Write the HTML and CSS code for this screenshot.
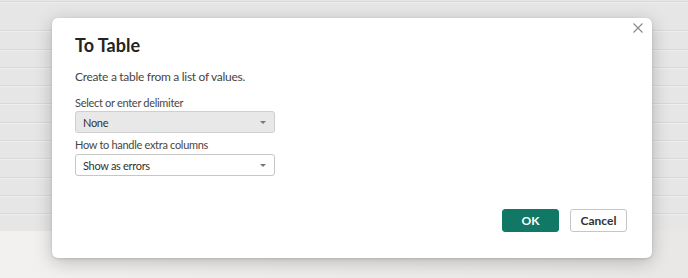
FILE: index.html
```html
<!DOCTYPE html>
<html lang="en">
<head>
  <meta charset="UTF-8" />
  <title>To Table</title>
  <link rel="stylesheet" href="styles.css">
</head>
<body>
  <div class="backdrop">
    <div class="grid"></div>
    <div class="footer-area"></div>
  </div>

  <div class="dialog">
    <button class="close" aria-label="Close">
      <svg width="10" height="10" viewBox="0 0 10 10">
        <path d="M0.5 0.5 L9.5 9.5 M9.5 0.5 L0.5 9.5" stroke="#8a8886" stroke-width="1.1" fill="none"/>
      </svg>
    </button>
    <h2>To Table</h2>
    <p class="desc">Create a table from a list of values.</p>

    <label class="field-label">Select or enter delimiter</label>
    <div class="select disabled">
      <span>None</span>
      <span class="caret"></span>
    </div>

    <label class="field-label second">How to handle extra columns</label>
    <div class="select">
      <span>Show as errors</span>
      <span class="caret"></span>
    </div>

    <div class="actions">
      <button class="btn primary">OK</button>
      <button class="btn">Cancel</button>
    </div>
  </div>
</body>
</html>
```

FILE: styles.css
```css
* {
  box-sizing: border-box;
}

body {
  margin: 0;
  font-family: Lato, 'Open Sans', sans-serif;
  background: #f0efee;
  overflow: hidden;
}

.backdrop {
  height: 278px;
  display: flex;
  flex-direction: column;
}

.grid {
  height: 231px;
  background-color: #e6e6e6;
  background-image: repeating-linear-gradient(to bottom,
    transparent 0, transparent 13.3px,
    #d9d9d9 13.3px, #d9d9d9 14.3px, #eeeeee 14.3px, #eeeeee 15.3px,
    transparent 15.3px, transparent 18.3px);
  background-position: 0 17px;
  background-repeat: repeat-y;
}

.footer-area {
  flex: 1;
  background: linear-gradient(to right, #f2f1f0, #e9e8e7);
}

.dialog {
  position: absolute;
  left: 52px;
  top: 18px;
  width: 600px;
  height: 240px;
  background: #fff;
  border-radius: 6px;
  box-shadow: 0 4px 18px rgba(0,0,0,0.22), 0 1px 3px rgba(0,0,0,0.12);
  padding: 15px 25px 26px 23px;
  display: flex;
  flex-direction: column;
  align-items: flex-start;
  color: #323130;
}

.close {
  position: absolute;
  left: 581px;
  top: 5px;
  width: 10px;
  height: 10px;
  padding: 0;
  border: none;
  background: none;
  line-height: 0;
}

h2 {
  margin: 0;
  font-size: 18px;
  line-height: 24px;
  font-weight: 700;
  color: #252423;
}

.desc {
  margin: 11px 0 0;
  font-size: 12px;
  letter-spacing: -0.3px;
  line-height: 18px;
  color: #484644;
}

.field-label {
  margin-top: 9px;
  font-size: 11px;
  letter-spacing: -0.3px;
  line-height: 16px;
  color: #484644;
}

.field-label.second {
  margin-top: 4px;
  margin-bottom: 1px;
}

.select {
  width: 200px;
  height: 22px;
  border: 1px solid #c8c6c4;
  border-radius: 3px;
  background: #fff;
  display: flex;
  align-items: center;
  justify-content: space-between;
  padding: 0 8px 0 7px;
  font-size: 11px;
  letter-spacing: -0.3px;
  color: #323130;
}

.select.disabled {
  background: #e8e8e8;
  border-color: #cfcfcf;
}

.caret {
  width: 0;
  height: 0;
  border-left: 3px solid transparent;
  border-right: 3px solid transparent;
  border-top: 3px solid #777;
}

.actions {
  margin-top: auto;
  align-self: flex-end;
  display: flex;
  gap: 11px;
}

.btn {
  width: 57px;
  height: 23px;
  border: 1px solid #c8c6c4;
  border-radius: 3px;
  background: #fff;
  font-family: Lato, 'Open Sans', sans-serif;
  font-size: 12px;
  font-weight: 700;
  color: #323130;
  padding: 0;
  cursor: pointer;
}

.btn.primary {
  background: #117865;
  border-color: #117865;
  color: #fff;
}
```
